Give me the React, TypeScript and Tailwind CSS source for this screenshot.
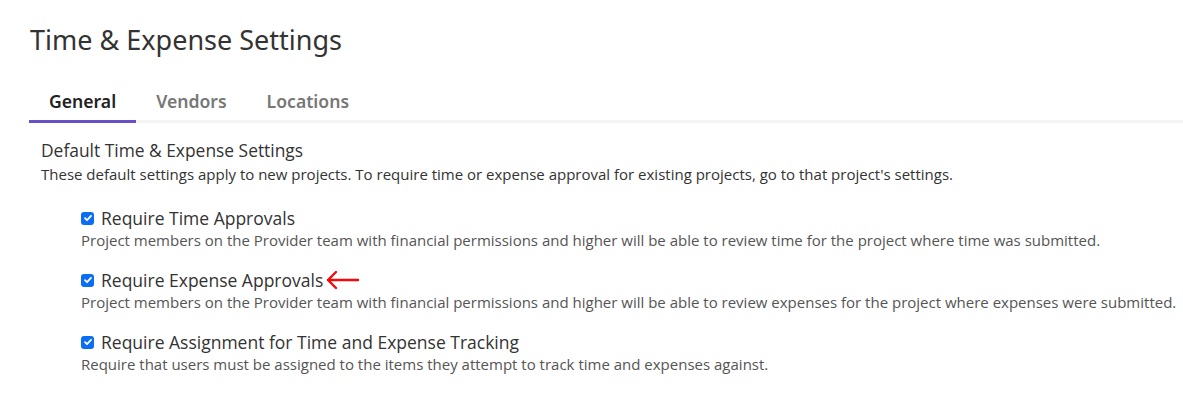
import React from "react";

const items = [
  {
    label: "Require Time Approvals",
    desc: "Project members on the Provider team with financial permissions and higher will be able to review time for the project where time was submitted.",
  },
  {
    label: "Require Expense Approvals",
    desc: "Project members on the Provider team with financial permissions and higher will be able to review expenses for the project where expenses were submitted.",
    arrow: true,
  },
  {
    label: "Require Assignment for Time and Expense Tracking",
    desc: "Require that users must be assigned to the items they attempt to track time and expenses against.",
  },
];

function CheckBox() {
  return (
    <span className="flex h-[13px] w-[13px] items-center justify-center rounded-[3px] bg-[#0b6cf4]">
      <svg width="10" height="10" viewBox="0 0 10 10" fill="none">
        <path d="M2 5.2l2 2L8 2.8" stroke="white" strokeWidth="1.8" strokeLinecap="round" strokeLinejoin="round" />
      </svg>
    </span>
  );
}

function RedArrow() {
  return (
    <svg width="36" height="22" viewBox="0 0 36 22" fill="none" className="ml-[1px]">
      <path d="M34 11H4M12 3L4 11l8 8" stroke="#f5080c" strokeWidth="2.4" strokeLinecap="round" strokeLinejoin="round" />
    </svg>
  );
}

export default function App() {
  return (
    <main className="min-h-screen bg-white font-['Open_Sans',sans-serif] text-[#333]">
      <div className="pt-[22px]">
        <h1 className="pl-[30px] font-['Noto_Sans',sans-serif] text-[27px] leading-[36px] text-[#333]">
          Time &amp; Expense Settings
        </h1>

        {/* Tabs */}
        <div className="mt-[30px] flex pl-[29px] font-['Noto_Sans',sans-serif] text-[17.6px] font-semibold leading-[26px]">
          <div className="border-b-[3px] border-[#6b4fc8] px-[20px] pb-[6px] text-[#222]">General</div>
          <div className="border-b-[3px] border-[#f4f4f4] px-[20px] pb-[6px] text-[#777]">Vendors</div>
          <div className="flex-1 border-b-[3px] border-[#f4f4f4] px-[20px] pb-[6px] text-[#777]">Locations</div>
        </div>

        {/* Section */}
        <section className="pl-[41px] pt-[14px]">
          <h2 className="text-[17.4px] leading-[26px] text-[#333]">Default Time &amp; Expense Settings</h2>
          <p className="text-[15px] leading-[22px] text-[#333]">
            These default settings apply to new projects. To require time or expense approval for existing projects, go to that project's settings.
          </p>

          <div className="mt-[22px] flex flex-col gap-[18px] pl-[40px]">
            {items.map((item) => (
              <div key={item.label}>
                <div className="flex items-center">
                  <CheckBox />
                  <span className="ml-[7px] text-[17.5px] leading-[22px] text-[#333]">{item.label}</span>
                  {item.arrow && <RedArrow />}
                </div>
                <p className="whitespace-nowrap text-[15px] leading-[22px] text-[#555]">{item.desc}</p>
              </div>
            ))}
          </div>
        </section>
      </div>
    </main>
  );
}
